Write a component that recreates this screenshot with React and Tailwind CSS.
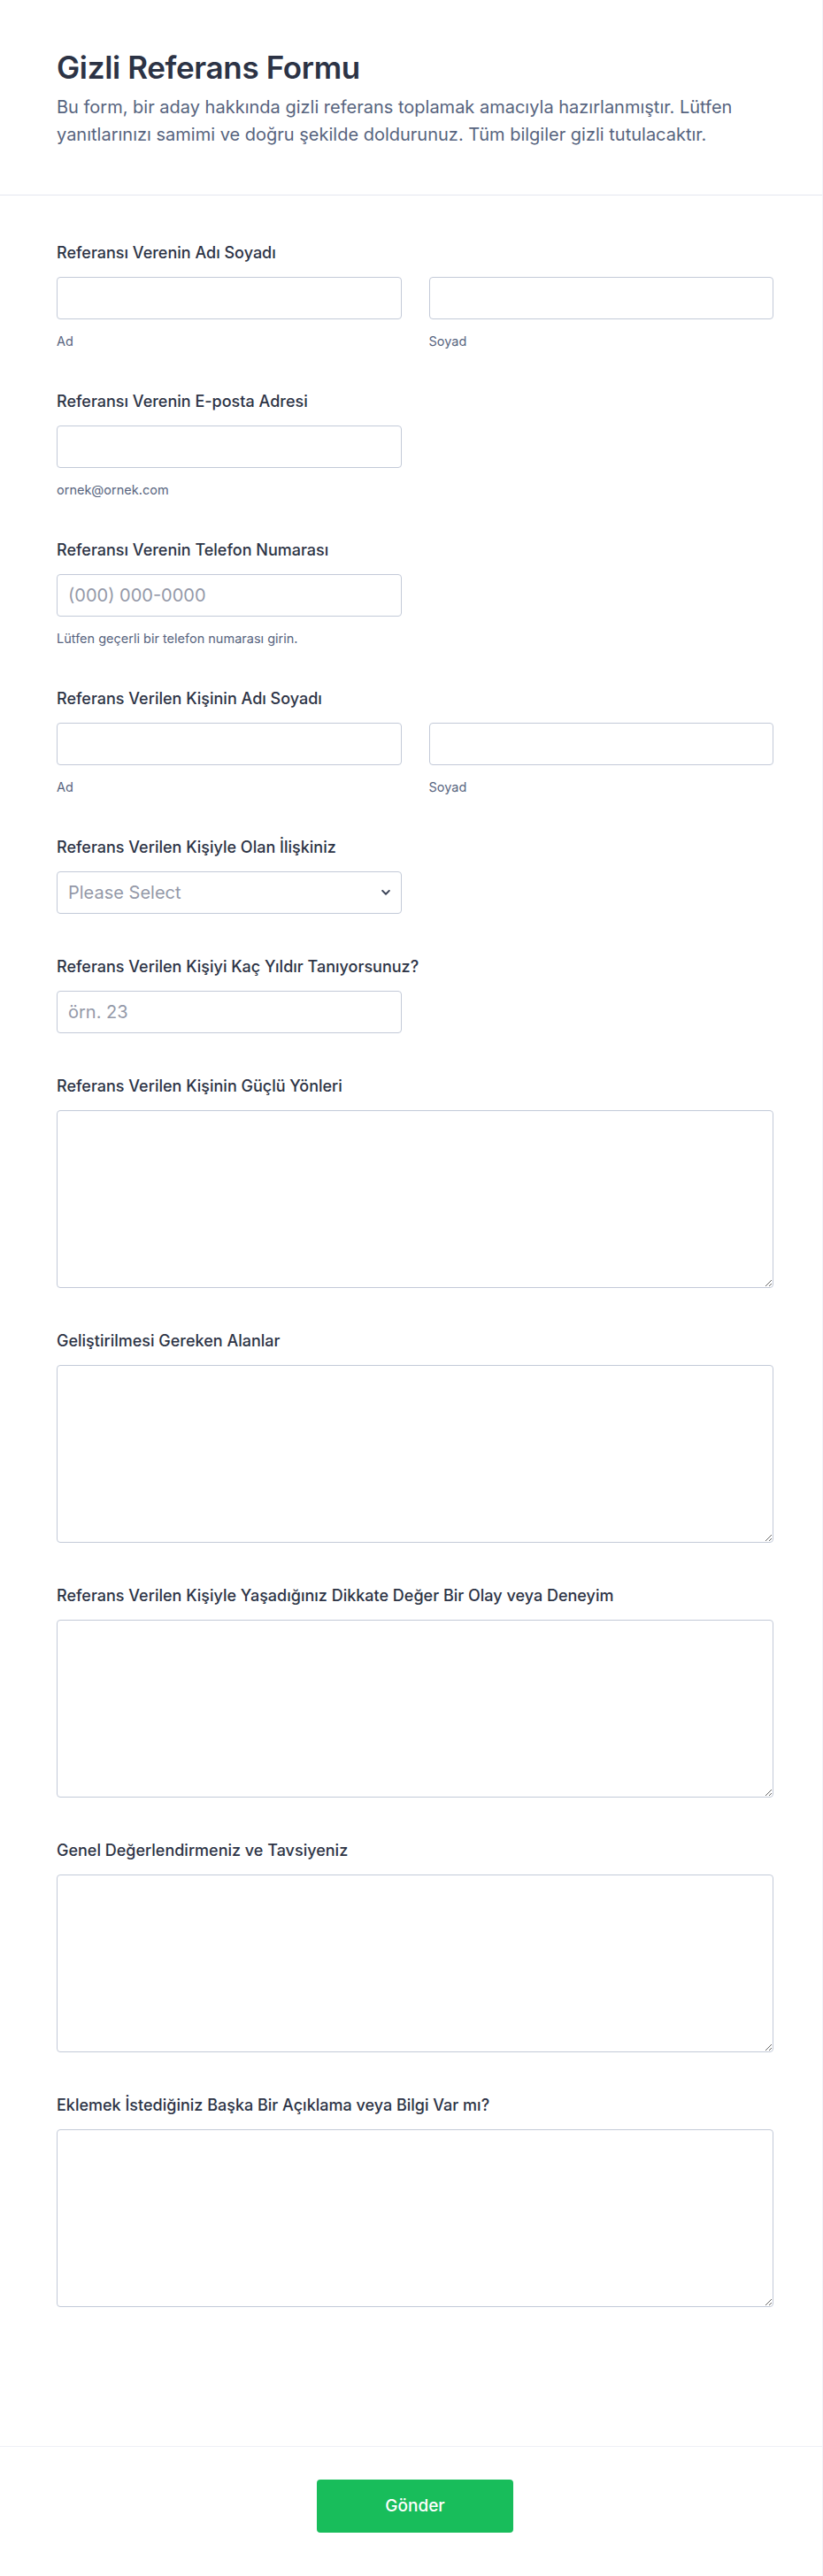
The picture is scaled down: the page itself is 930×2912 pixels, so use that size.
import React from "react";

const font = { fontFamily: "Inter, 'Noto Sans', sans-serif" };

function Label({ children }) {
  return (
    <div className="text-[18px] leading-[24px] font-medium text-[#2c3345] mb-[15px]">
      {children}
    </div>
  );
}

function Sub({ children }) {
  return (
    <div className="pt-[17px] text-[14.5px] leading-[16px] text-[#57647e]">
      {children}
    </div>
  );
}

const inputCls =
  "block h-12 w-full rounded-[4px] border border-[#c3cad8] bg-white px-3 text-[20px] text-[#2c3345] placeholder:text-[#9499a8] outline-none";

function TextField({ label, placeholder, sub }) {
  return (
    <div className="pb-[48px]">
      <Label>{label}</Label>
      <div className="w-[390px]">
        <input className={inputCls} placeholder={placeholder} style={font} />
        {sub && <Sub>{sub}</Sub>}
      </div>
    </div>
  );
}

function NameField({ label }) {
  return (
    <div className="pb-[48px]">
      <Label>{label}</Label>
      <div className="grid grid-cols-2 gap-x-[31px]">
        <div>
          <input className={inputCls} style={font} />
          <Sub>Ad</Sub>
        </div>
        <div>
          <input className={inputCls} style={font} />
          <Sub>Soyad</Sub>
        </div>
      </div>
    </div>
  );
}

function SelectField({ label }) {
  return (
    <div className="pb-[48px]">
      <Label>{label}</Label>
      <div className="relative w-[390px]">
        <select
          className="block h-12 w-full appearance-none rounded-[4px] border border-[#c3cad8] bg-white px-3 text-[20px] text-[#9499a8] outline-none"
          style={font}
          defaultValue=""
        >
          <option value="">Please Select</option>
        </select>
        <svg
          className="pointer-events-none absolute right-[13px] top-1/2 -translate-y-1/2"
          width="10"
          height="7"
          viewBox="0 0 10 7"
          fill="none"
        >
          <path
            d="M1.2 1.4 5 5.2 8.8 1.4"
            stroke="#3d4559"
            strokeWidth="2"
            strokeLinecap="round"
            strokeLinejoin="round"
          />
        </svg>
      </div>
    </div>
  );
}

function AreaField({ label }) {
  return (
    <div className="pb-[48px]">
      <Label>{label}</Label>
      <textarea
        className="block h-[201px] w-full resize-y rounded-[4px] border border-[#c3cad8] bg-white px-3 py-2 text-[20px] text-[#2c3345] outline-none"
        style={font}
      />
    </div>
  );
}

export default function App() {
  return (
    <div className="w-[930px] bg-white border-r border-[#f1f2f9]" style={font}>
      <header className="border-b border-[#e4e6ef] pl-[64px] pr-[55px] pt-[54px] pb-[52px]">
        <h1 className="text-[35px] leading-[44px] font-semibold tracking-[-0.01em] text-[#2c3345]">
          Gizli Referans Formu
        </h1>
        <p className="mt-2 text-[20px] leading-[31px] text-[#57647e]">
          Bu form, bir aday hakkında gizli referans toplamak amacıyla hazırlanmıştır. Lütfen
          yanıtlarınızı samimi ve doğru şekilde doldurunuz. Tüm bilgiler gizli tutulacaktır.
        </p>
      </header>

      <main className="pl-[64px] pr-[55px] pt-[53px] pb-[109px]">
        <NameField label="Referansı Verenin Adı Soyadı" />
        <TextField label="Referansı Verenin E-posta Adresi" sub="ornek@ornek.com" />
        <TextField
          label="Referansı Verenin Telefon Numarası"
          placeholder="(000) 000-0000"
          sub="Lütfen geçerli bir telefon numarası girin."
        />
        <NameField label="Referans Verilen Kişinin Adı Soyadı" />
        <SelectField label="Referans Verilen Kişiyle Olan İlişkiniz" />
        <TextField label="Referans Verilen Kişiyi Kaç Yıldır Tanıyorsunuz?" placeholder="örn. 23" />
        <AreaField label="Referans Verilen Kişinin Güçlü Yönleri" />
        <AreaField label="Geliştirilmesi Gereken Alanlar" />
        <AreaField label="Referans Verilen Kişiyle Yaşadığınız Dikkate Değer Bir Olay veya Deneyim" />
        <AreaField label="Genel Değerlendirmeniz ve Tavsiyeniz" />
        <AreaField label="Eklemek İstediğiniz Başka Bir Açıklama veya Bilgi Var mı?" />
      </main>

      <footer className="flex justify-center border-t border-[#eff0f6] pl-[64px] pr-[55px] pt-[37px] pb-[49px]">
        <button
          className="h-[60px] w-[222px] rounded-[4px] bg-[#18bd5b] text-[19px] font-medium text-white"
          style={font}
        >
          Gönder
        </button>
      </footer>
    </div>
  );
}
